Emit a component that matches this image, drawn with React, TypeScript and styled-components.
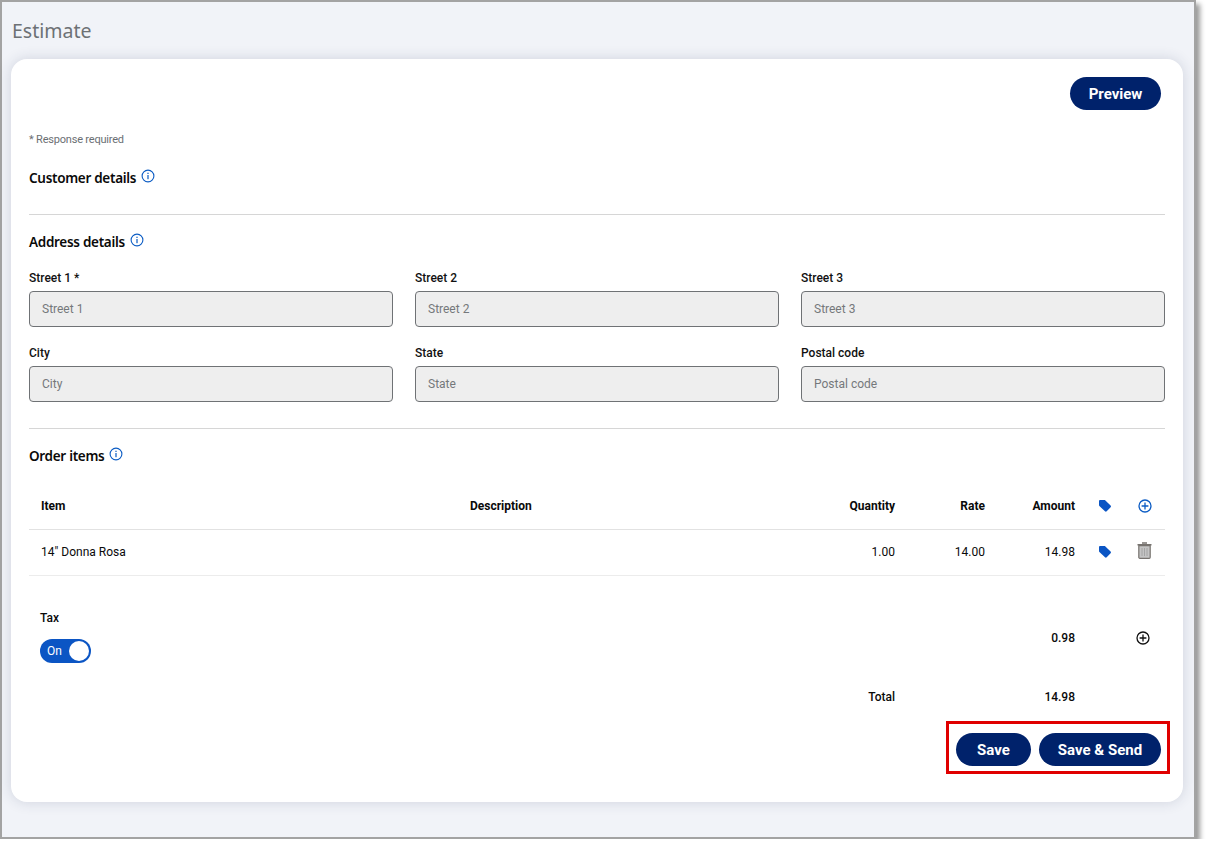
import styled, { createGlobalStyle } from "styled-components";

const GlobalStyle = createGlobalStyle`
  html, body {
    margin: 0;
    padding: 0;
    background: #fff;
    font-family: Roboto, "Liberation Sans", sans-serif;
  }
  * { box-sizing: border-box; }
`;

const InfoIcon = () => (
  <svg width="14" height="14" viewBox="0 0 14 14" fill="none">
    <circle cx="7" cy="7" r="5.9" stroke="#0b5cc4" strokeWidth="1.1" />
    <rect x="6.4" y="6" width="1.2" height="4.2" fill="#0b5cc4" />
    <rect x="6.4" y="3.7" width="1.2" height="1.3" fill="#0b5cc4" />
  </svg>
);

const TagIcon = () => (
  <svg width="14" height="14" viewBox="0 0 14 14">
    <path d="M1 2.2C1 1.5 1.5 1 2.2 1H6.4c.4 0 .7.1 1 .4l5.2 5.2c.5.5.5 1.2 0 1.7l-3.9 4c-.5.5-1.2.5-1.7 0L1.4 7.1C1.1 6.8 1 6.5 1 6.1Z" fill="#0b55c4" />
  </svg>
);

const PlusCircle = ({ color }: { color: string }) => (
  <svg width="14" height="14" viewBox="0 0 14 14" fill="none">
    <circle cx="7" cy="7" r="6" stroke={color} strokeWidth="1.3" />
    <path d="M7 3.6v6.8M3.6 7h6.8" stroke={color} strokeWidth="1.3" />
  </svg>
);

const TrashIcon = () => (
  <svg width="15" height="17" viewBox="0 0 15 17" fill="none">
    <path d="M5 1h5M0.5 2.8h14" stroke="#77736f" strokeWidth="1.5" />
    <path d="M1.8 3.6h11.4v11.6c0 .6-.4 1.1-1 1.1H2.8c-.6 0-1-.5-1-1.1Z" fill="#c4c4c4" stroke="#77736f" strokeWidth="1.2" />
    <path d="M5 6v8M7.5 6v8M10 6v8" stroke="#a0a0a0" strokeWidth="0.9" />
  </svg>
);

const addressFields = [
  { label: "Street 1 *", placeholder: "Street 1" },
  { label: "Street 2", placeholder: "Street 2" },
  { label: "Street 3", placeholder: "Street 3" },
  { label: "City", placeholder: "City" },
  { label: "State", placeholder: "State" },
  { label: "Postal code", placeholder: "Postal code" },
];

function App() {
  return (
    <>
      <GlobalStyle />
      <Frame>
        <PageTitle>Estimate</PageTitle>
        <Card>
          <TopBar>
            <PillButton $width={91}>Preview</PillButton>
          </TopBar>
          <Required>* Response required</Required>
          <SectionTitle $top={21}>
            Customer details
            <InfoIcon />
          </SectionTitle>
          <Divider $top={26} />
          <SectionTitle $top={17}>
            Address details
            <InfoIcon />
          </SectionTitle>
          <FieldGrid>
            {addressFields.map((field) => (
              <Field key={field.label}>
                <FieldLabel>{field.label}</FieldLabel>
                <FieldInput disabled placeholder={field.placeholder} />
              </Field>
            ))}
          </FieldGrid>
          <Divider $top={26} />
          <SectionTitle $top={17}>
            Order items
            <InfoIcon />
          </SectionTitle>
          <HeadRow>
            <ItemCell>Item</ItemCell>
            <DescCell>Description</DescCell>
            <QtyCell>Quantity</QtyCell>
            <RateCell>Rate</RateCell>
            <AmountCell>Amount</AmountCell>
            <TagCell><TagIcon /></TagCell>
            <ActionCell><PlusCircle color="#0b5cc4" /></ActionCell>
          </HeadRow>
          <BodyRow>
            <ItemCell>14" Donna Rosa</ItemCell>
            <DescCell />
            <QtyCell>1.00</QtyCell>
            <RateCell>14.00</RateCell>
            <AmountCell>14.98</AmountCell>
            <TagCell><TagIcon /></TagCell>
            <TrashCell><TrashIcon /></TrashCell>
          </BodyRow>
          <TaxRow>
            <TaxColumn>
              <TaxLabel>Tax</TaxLabel>
              <Toggle>
                On
                <Knob />
              </Toggle>
            </TaxColumn>
            <TaxAmount>0.98</TaxAmount>
            <TaxAdd><PlusCircle color="#111" /></TaxAdd>
          </TaxRow>
          <TotalRow>
            <TotalLabel>Total</TotalLabel>
            <TotalAmount>14.98</TotalAmount>
          </TotalRow>
          <FooterBar>
            <Highlight>
              <PillButton $width={75}>Save</PillButton>
              <PillButton $width={122}>Save &amp; Send</PillButton>
            </Highlight>
          </FooterBar>
        </Card>
      </Frame>
    </>
  );
}

const Frame = styled.div`
  width: 1196px;
  height: 839px;
  padding: 0 10px 0 9px;
  background: #f1f3f8;
  border: 2px solid #a3a3a3;
  box-shadow: 4px 4px 5px rgba(0, 0, 0, 0.4);
`;

const PageTitle = styled.h1`
  margin: 0;
  padding: 15px 0 0 1px;
  height: 57px;
  font-family: "Noto Sans", sans-serif;
  font-size: 19.5px;
  line-height: 27px;
  font-weight: 400;
  color: #6d7175;
`;

const Card = styled.div`
  width: 1172px;
  height: 743px;
  padding: 18px 18px 0;
  background: #fff;
  border-radius: 16px;
  box-shadow: 0 0 14px rgba(40, 50, 90, 0.16);
`;

const TopBar = styled.div`
  display: flex;
  justify-content: flex-end;
  padding-right: 4px;
`;

const PillButton = styled.button<{ $width: number }>`
  width: ${(p) => p.$width}px;
  height: 33px;
  padding: 0;
  border: 0;
  border-radius: 17px;
  background: #00226b;
  color: #fff;
  font-family: Roboto, sans-serif;
  font-size: 15px;
  font-weight: 700;
`;

const Required = styled.div`
  margin-top: 23px;
  font-size: 11px;
  line-height: 14px;
  letter-spacing: -0.2px;
  color: #6b6f73;
`;

const SectionTitle = styled.h2<{ $top: number }>`
  display: flex;
  align-items: flex-start;
  gap: 5px;
  margin: ${(p) => p.$top}px 0 0;
  font-family: "Noto Sans", sans-serif;
  font-size: 13.5px;
  line-height: 20px;
  font-weight: 600;
  letter-spacing: -0.3px;
  color: #0a0a0a;
  svg { margin-top: 1px; }
`;

const Divider = styled.hr<{ $top: number }>`
  margin: ${(p) => p.$top}px 0 0;
  border: 0;
  border-top: 1px solid #d6d6d6;
`;

const FieldGrid = styled.div`
  display: grid;
  grid-template-columns: repeat(3, 364px);
  column-gap: 22px;
  row-gap: 19px;
  margin-top: 19px;
`;

const Field = styled.div`
  display: flex;
  flex-direction: column;
`;

const FieldLabel = styled.label`
  height: 20px;
  font-size: 12px;
  line-height: 14px;
  font-weight: 500;
  color: #111;
`;

const FieldInput = styled.input`
  width: 100%;
  height: 36px;
  padding: 0 12px;
  border: 1px solid #6f7275;
  border-radius: 4px;
  background: #eeeeee;
  font-family: Roboto, sans-serif;
  font-size: 12px;
  &::placeholder { color: #75787b; opacity: 1; }
`;

const HeadRow = styled.div`
  display: flex;
  align-items: center;
  height: 49px;
  margin-top: 15px;
  padding-top: 2px;
  font-size: 12px;
  font-weight: 700;
  color: #0a0a0a;
  border-bottom: 1px solid #e2e2e2;
`;

const BodyRow = styled(HeadRow)`
  height: 46px;
  margin-top: 0;
  padding: 0 0 2px;
  font-weight: 400;
  border-bottom-color: #ececec;
`;

const ItemCell = styled.div`
  width: 441px;
  padding-left: 12px;
`;

const DescCell = styled.div`
  width: 250px;
`;

const QtyCell = styled.div`
  width: 175px;
  text-align: right;
`;

const RateCell = styled.div`
  width: 90px;
  text-align: right;
`;

const AmountCell = styled.div`
  width: 90px;
  text-align: right;
`;

const TagCell = styled.div`
  display: flex;
  justify-content: center;
  width: 60px;
`;

const ActionCell = styled.div`
  display: flex;
  justify-content: center;
  width: 20px;
`;

const TrashCell = styled(ActionCell)`
  padding: 0 2px 3px 0;
`;

const TaxRow = styled.div`
  display: flex;
  height: 90px;
  padding: 35px 0 0 11px;
  font-size: 12px;
  color: #0a0a0a;
`;

const TaxColumn = styled.div`
  width: 963px;
`;

const TaxLabel = styled.div`
  font-weight: 500;
  line-height: 14px;
`;

const Toggle = styled.div`
  position: relative;
  width: 51px;
  height: 24px;
  margin-top: 14px;
  padding-left: 7px;
  border-radius: 12px;
  background: #0b55c4;
  color: #fff;
  font-size: 12px;
  line-height: 24px;
`;

const Knob = styled.span`
  position: absolute;
  top: 2px;
  right: 2px;
  width: 20px;
  height: 20px;
  border-radius: 50%;
  background: #fff;
`;

const TaxAmount = styled.div`
  width: 72px;
  margin-top: 20px;
  font-weight: 500;
  text-align: right;
  line-height: 14px;
`;

const TaxAdd = styled.div`
  margin: 20px 0 0 61px;
`;

const TotalRow = styled.div`
  display: flex;
  margin-top: 24px;
  font-size: 12px;
  line-height: 14px;
  color: #0a0a0a;
`;

const TotalLabel = styled.div`
  width: 866px;
  text-align: right;
  font-weight: 500;
`;

const TotalAmount = styled.div`
  width: 180px;
  font-weight: 500;
  text-align: right;
`;

const FooterBar = styled.div`
  display: flex;
  justify-content: flex-end;
  margin: 17px -5px 0 0;
`;

const Highlight = styled.div`
  display: flex;
  gap: 8px;
  width: 224px;
  height: 53px;
  padding: 9px 6px 0 7px;
  border: 3px solid #e00000;
`;

export default App;
